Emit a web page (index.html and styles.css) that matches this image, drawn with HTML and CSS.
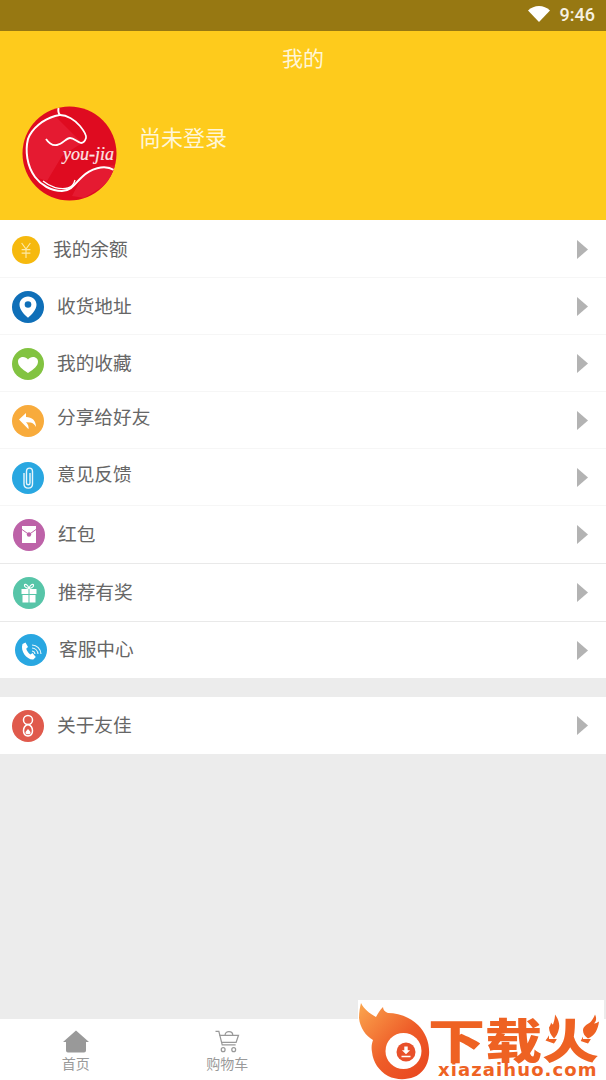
FILE: index.html
```html
<!DOCTYPE html>
<html lang="zh-CN">
<head>
<meta charset="utf-8">
<title>我的</title>
<link rel="stylesheet" href="styles.css">
</head>
<body>
<div class="app">
  <div class="status">
    <svg class="wifi" viewBox="0 0 22 16"><path d="M0 4.500C3 1.700 7 0 11 0s8 1.700 11 4.500L11 16z"/></svg>
    <span class="clock">9:46</span>
  </div>
  <header class="head">
    <h1 class="title">我的</h1>
    <div class="profile">
      <svg class="avatar" viewBox="0 0 95 95">
        <defs><clipPath id="c"><circle cx="47.500" cy="47.500" r="47"/></clipPath></defs>
        <circle cx="47.500" cy="47.500" r="47" fill="#df0b20"/>
        <g clip-path="url(#c)">
          <path d="M5 33C10 22 22 13 33 10L60 37 40 50 25 75 13 71C5 60 3 45 5 33zM60 71C68 63 82 58 95 60L90 75 62 92 50 90z" fill="#e51a31"/>
          <path d="M38 9C45 9 53 14 58 20 62 25 65 29 64 32 63 35 61 37 59 37 55 36 52 32 48 32 44 32 41 38 35 39 30 40 26 36 24 33" fill="none" stroke="#fff" stroke-width="1.800"/>
          <path d="M36.500 2C36 5 36 7 38 9L33 10C22 13 10 22 6 33 3 45 5 60 13 71 19 79 29 85 40 85 50 85 54 76 60 71 68 63 82 58 92 64" fill="none" stroke="#fff" stroke-width="2"/>
          <path d="M21 75C28 81 38 84 46 82 50 81 52 78 53 74" fill="none" stroke="#fff" stroke-width="1.300"/>
          <text x="41" y="54" class="brand">you-jia</text>
        </g>
      </svg>
      <span class="login">尚未登录</span>
    </div>
  </header>

  <section class="group">
    <a class="row row-a soft">
      <svg class="ico small" viewBox="0 0 32 32"><circle cx="16" cy="16" r="16" fill="#f6b90e"/><path d="M11 8l5 7 5-7M16 15v10M11 15.500h10M11 19.500h10" fill="none" stroke="#fde9a8" stroke-width="1.300"/></svg>
      <span class="label">我的余额</span>
      <svg class="arrow" viewBox="0 0 11 19"><path d="M0 0l11 9.500L0 19z"/></svg>
    </a>
    <a class="row row-b soft">
      <svg class="ico" viewBox="0 0 32 32"><circle cx="16" cy="16" r="16" fill="#0f6fb8"/><path d="M16 5.500c-5 0-8.500 3.700-8.500 8.300 0 5 5 10 8.500 13 3.500-3 8.500-8 8.500-13 0-4.600-3.500-8.300-8.500-8.300z" fill="#fff"/><circle cx="16" cy="13.500" r="3.300" fill="#0f6fb8"/></svg>
      <span class="label">收货地址</span>
      <svg class="arrow" viewBox="0 0 11 19"><path d="M0 0l11 9.500L0 19z"/></svg>
    </a>
    <a class="row row-b soft">
      <svg class="ico" viewBox="0 0 32 32"><circle cx="16" cy="16" r="16" fill="#82c341"/><path d="M16 25C10 21 6 18 6 13.500 6 10.500 8.500 9 11 9c2 0 4 1 5 2.500C17 10 19 9 21 9c2.500 0 5 1.500 5 4.500C26 18 22 21 16 25z" fill="#fff"/></svg>
      <span class="label">我的收藏</span>
      <svg class="arrow" viewBox="0 0 11 19"><path d="M0 0l11 9.500L0 19z"/></svg>
    </a>
    <a class="row row-b soft">
      <svg class="ico" viewBox="0 0 32 32"><circle cx="16" cy="16" r="16" fill="#f8ab3c"/><path d="M7 14.500L14 8v4c6 0 10 3.500 10 10-1.500-2.500-3-4-5.500-4.500l-4.500-.2c2 2 3 4 2.500 7z" fill="#fff"/></svg>
      <span class="label lift">分享给好友</span>
      <svg class="arrow" viewBox="0 0 11 19"><path d="M0 0l11 9.500L0 19z"/></svg>
    </a>
    <a class="row row-b soft">
      <svg class="ico" viewBox="0 0 32 32"><circle cx="16" cy="16" r="16" fill="#29a7e1"/><path d="M12 11v11c0 5.500 8.500 5.500 8.500 0V9.500c0-4.500-6-4.500-6 0V21c0 2.400 3.500 2.400 3.500 0V11" fill="none" stroke="#e8f6fc" stroke-width="1.400"/></svg>
      <span class="label lift">意见反馈</span>
      <svg class="arrow" viewBox="0 0 11 19"><path d="M0 0l11 9.500L0 19z"/></svg>
    </a>
    <a class="row row-c">
      <svg class="ico" viewBox="0 0 32 32"><circle cx="16" cy="16" r="16" fill="#bd62a8"/><path d="M9 7h14v17H9z" fill="#fff"/><path d="M9 10.500l7 5 7-5" fill="none" stroke="#bd62a8" stroke-width="1"/><circle cx="16" cy="15.500" r="2.200" fill="#bd62a8"/></svg>
      <span class="label">红包</span>
      <svg class="arrow" viewBox="0 0 11 19"><path d="M0 0l11 9.500L0 19z"/></svg>
    </a>
    <a class="row row-c line">
      <svg class="ico" viewBox="0 0 32 32"><circle cx="16" cy="16" r="16" fill="#57c5a8"/><path d="M8.500 12h7v5h-7zM16.500 12h7v5h-7zM9.500 18h6v7.500h-6zM16.500 18h6v7.500h-6z" fill="#fff"/><path d="M16 11.500c-3-.5-5-2-4.500-3.500s3.500-.5 4.500 3.500c1-4 4-5 4.500-3.500s-1.500 3-4.500 3.500z" fill="none" stroke="#fff" stroke-width="1.200"/></svg>
      <span class="label">推荐有奖</span>
      <svg class="arrow" viewBox="0 0 11 19"><path d="M0 0l11 9.500L0 19z"/></svg>
    </a>
    <a class="row row-d line">
      <svg class="ico" viewBox="0 0 32 32"><circle cx="16" cy="16" r="16" fill="#29a7e1"/><path d="M7.500 10l3-1.500 2.500 4.500-1.800 1.800c.8 2.500 2.300 4.500 4.300 5.700l2-1.500 3.300 4-2.500 2.500C12 26 5 17.500 7.500 10z" fill="#fff"/><path d="M17 17c1.500.2 2.800 1.300 3 3M17 14c3.200.2 5.700 2.800 6 6M17 11c5 .2 8.700 4 9 9" fill="none" stroke="#e3f4fb" stroke-width="1.200"/></svg>
      <span class="label">客服中心</span>
      <svg class="arrow" viewBox="0 0 11 19"><path d="M0 0l11 9.500L0 19z"/></svg>
    </a>
  </section>

  <section class="group second">
    <a class="row row-b">
      <svg class="ico" viewBox="0 0 32 32"><circle cx="16" cy="16" r="16" fill="#e05a4c"/><circle cx="16" cy="10" r="4.500" fill="none" stroke="#fff" stroke-width="1.500"/><path d="M16 14.500c-6 2-6 11 0 11.500 6-.5 6-9.500 0-11.500z" fill="none" stroke="#fff" stroke-width="1.500"/><path d="M16 19c-1.500 1.500-3 3-2.500 4.500.5 1 4.500 1 5 0 .5-1.500-1-3-2.500-4.500z" fill="#fff"/></svg>
      <span class="label">关于友佳</span>
      <svg class="arrow" viewBox="0 0 11 19"><path d="M0 0l11 9.500L0 19z"/></svg>
    </a>
  </section>

  <main class="spacer"></main>

  <nav class="tabs">
    <a class="tab">
      <svg class="tab-ico" viewBox="0 0 26 22"><path d="M13 0l13 11.500h-3V20a2 2 0 0 1-2 2H5a2 2 0 0 1-2-2v-8.500H0z" fill="#999"/></svg>
      <span>首页</span>
    </a>
    <a class="tab">
      <svg class="tab-ico" viewBox="0 0 26 24"><g fill="none" stroke="#999" stroke-width="1.300"><path d="M1 1.500h3.500L8 15.500h14"/><path d="M5 5.500h20l-2.500 7.500H7.500"/><circle cx="9" cy="20.500" r="2"/><circle cx="20" cy="20.500" r="2"/><path d="M11 5.500c0-5 8-5 8 0"/></g></svg>
      <span>购物车</span>
    </a>
    <span class="tab"></span>
    <span class="tab"></span>
  </nav>

  <aside class="mark">
    <svg class="flame" viewBox="0 0 74 80">
      <defs><linearGradient id="g" x1="0" y1="0" x2="1" y2="1"><stop offset="0" stop-color="#fba64e"/><stop offset=".55" stop-color="#ee5c28"/><stop offset="1" stop-color="#e8451f"/></linearGradient></defs>
      <path d="M3 3C6 9 11 13 18 17 20 13 22 10 25 7 25 10 27 12 30 13 40 13 52 17 60 25 68 33 72 44 71 55 70 66 64 74 56 77 48 80 38 80 30 76 21 71 15 62 14 52 13 47 14 43 15 40 8 36 2 28 1 18 1 12 2 7 3 3z" fill="url(#g)"/>
      <circle cx="45.500" cy="51" r="18" fill="#fff"/>
      <circle cx="48" cy="52" r="9.500" fill="#e8502a"/>
      <path d="M46.300 46.500h3.400v3.700h2.400L48 54.300l-4.100-4.100h2.400zM43.500 55.800h9v1.500h-9z" fill="#fff"/>
    </svg>
    <div class="mark-text">
      <span class="mark-cn">下载火</span>
      <span class="mark-en">xiazaihuo.com</span>
    </div>
    <svg class="spark spark-l" viewBox="0 0 11 24"><path d="M6 0c3 4 5 9 4 14-1 5-3 8-5 10-3-3-5-7-5-11 1-2 2-3 2-5 1 1 1 2 2 2 1-3 2-6 2-10z"/></svg>
    <svg class="spark spark-r" viewBox="0 0 16 24"><path d="M12 0c2 4 1 7-1 9 2 0 3-1 5-2-1 8-4 14-11 17-3-2-5-5-5-8 0-4 4-6 7-8 2-2 4-5 5-8z"/></svg>
  </aside>
</div>
</body>
</html>
```
FILE: styles.css
```css
* { box-sizing: border-box; }
html, body { margin: 0; padding: 0; }
body {
  font-family: "Noto Sans CJK SC", "Noto Sans", sans-serif;
  background: #ececec;
}
.app {
  position: relative;
  width: 606px;
  height: 1080px;
  display: flex;
  flex-direction: column;
  overflow: hidden;
  background: #ececec;
}
.status {
  height: 31px;
  background: #977812;
  display: flex;
  align-items: center;
  justify-content: flex-end;
  padding: 0 11px 1px 0;
  color: #fff;
}
.wifi { width: 22px; height: 16px; fill: #fff; margin-right: 10px; margin-top: -2px; }
.clock { font: 500 18px/1 Roboto, sans-serif; color: #f6f1e2; }
.head {
  height: 189px;
  background: #fecb1c;
  display: flex;
  flex-direction: column;
}
.title {
  margin: 0;
  padding-top: 10px;
  height: 75px;
  text-align: center;
  font-size: 21px;
  font-weight: 400;
  line-height: 32px;
  color: #fff6d8;
}
.profile {
  display: flex;
  align-items: flex-start;
  padding-left: 22px;
}
.avatar { width: 95px; height: 95px; flex: none; }
.brand { font: italic 400 18px "Liberation Serif", serif; fill: #fde6e6; stroke: #fde6e6; stroke-width: 0.200; }
.login {
  margin-left: 22px;
  font-size: 22px;
  line-height: 32px;
  margin-top: 14px;
  color: #fff6d8;
}
.group { background: #fff; }
.second { margin-top: 19px; }
.row {
  display: flex;
  align-items: center;
  height: 57px;
  background: #fff;
  padding-right: 18px;
}
.row-a { padding-left: 12px; height: 58px; padding-top: 1px; }
.row-b { padding-left: 12px; }
.row-c { padding-left: 13px; }
.row-c.line { height: 58px; }
.row-d { padding-left: 15px; }
.line { border-top: 1px solid #e9e9e9; }
.soft { box-shadow: inset 0 -1px 0 #f6f6f6; }
.ico { width: 32px; height: 32px; flex: none; }
.ico.small { width: 28px; height: 28px; }
.label {
  flex: 1;
  margin-left: 13px;
  margin-bottom: 4px;
  font-size: 18.700px;
  line-height: 28px;
  color: #666;
}
.lift { margin-bottom: 9px; }
.row-a .label { margin-left: 13px; }
.row-d .label { margin-left: 12px; }
.arrow { width: 11px; height: 19px; flex: none; fill: #b3b3b3; }
.spacer { flex: 1; }
.tabs {
  height: 61px;
  flex: none;
  background: #fff;
  display: grid;
  grid-template-columns: repeat(4, 1fr);
}
.tab {
  display: flex;
  flex-direction: column;
  align-items: center;
  padding-top: 11px;
  font-size: 14px;
  line-height: 20px;
  color: #9a9a9a;
}
.tab-ico { height: 23px; width: 26px; }
.mark {
  position: absolute;
  left: 358px;
  top: 1000px;
  width: 246px;
  height: 80px;
  background: #fff;
  display: flex;
}
.flame { width: 74px; height: 80px; flex: none; }
.mark-text {
  display: flex;
  flex-direction: column;
  margin-left: -4px;
  padding-top: 14px;
}
.mark-cn {
  display: block;
  height: 46px;
  font-size: 57px;
  font-weight: 900;
  line-height: 46px;
  color: #ee6223;
  white-space: nowrap;
  transform: scaleY(0.82);
}
.mark-en {
  font: 700 18px/16px "DejaVu Sans", sans-serif;
  letter-spacing: 1.100px;
  margin-left: 10px;
  margin-top: 2px;
  color: #ee6223;
  white-space: nowrap;
}
.spark { position: absolute; top: 14px; fill: #ee6223; background: #fff; }
.spark-l { left: 191px; width: 11px; height: 25px; }
.spark-r { left: 225px; width: 16px; height: 25px; }
```
